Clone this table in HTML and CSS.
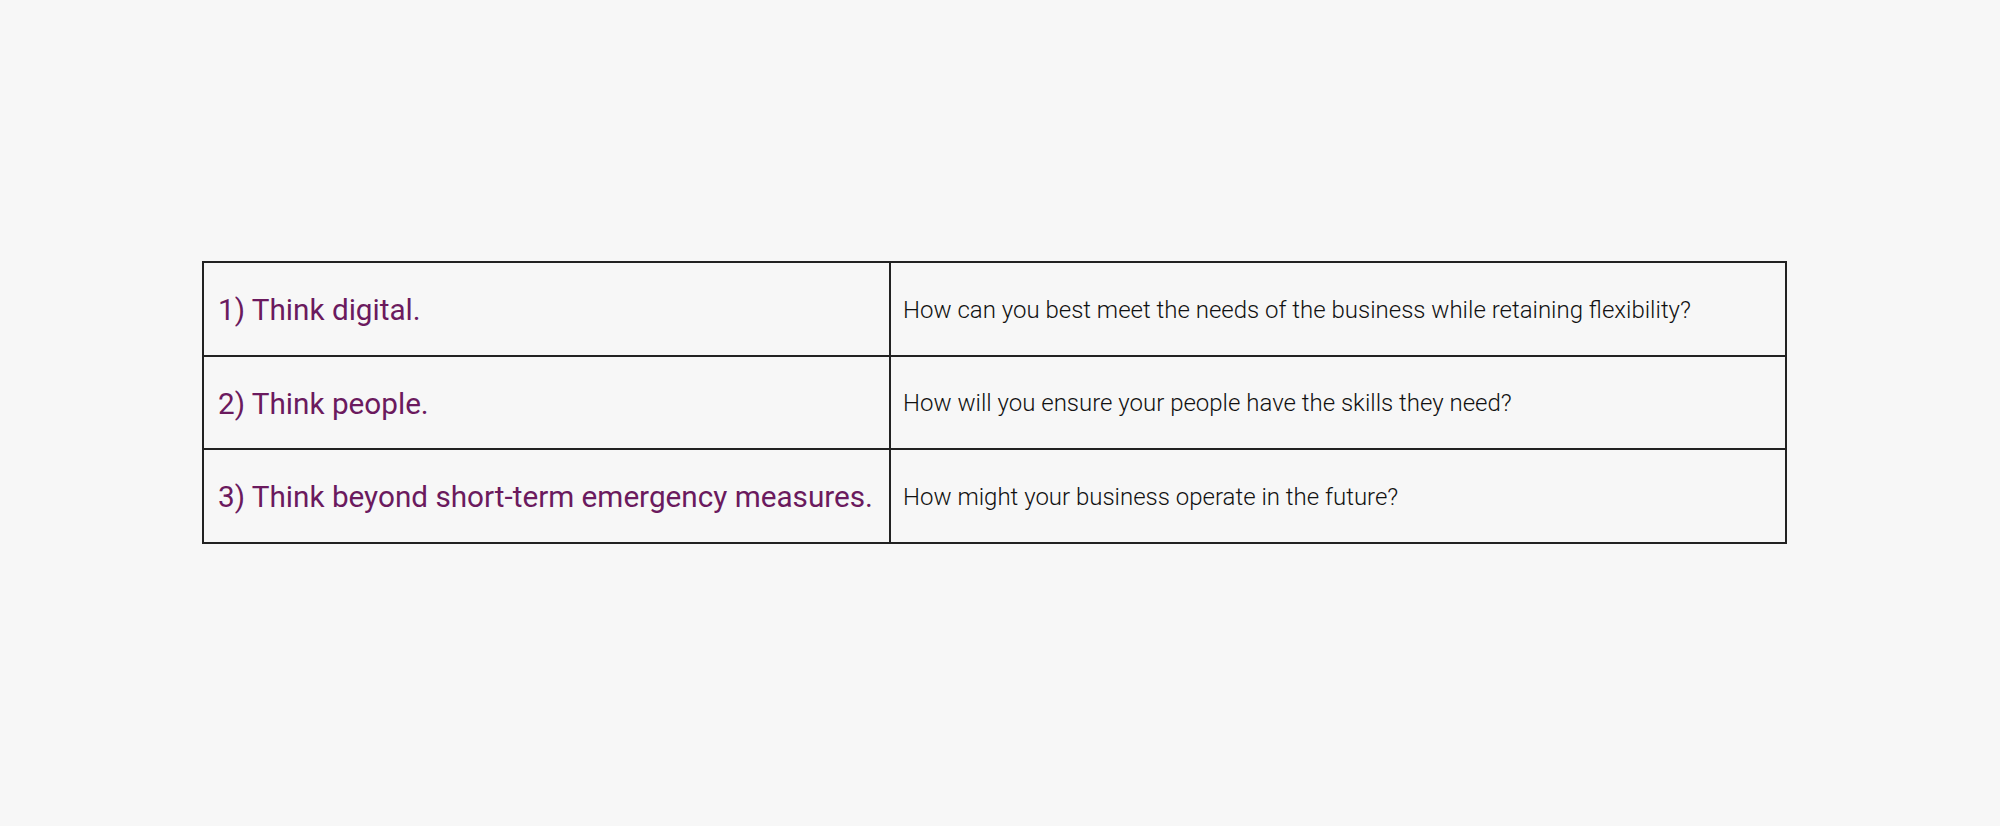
FILE: index.html
```html
<!DOCTYPE html>
<html>
<head>
<meta charset="utf-8">
<link rel="stylesheet" href="styles.css">
</head>
<body>
<main class="page">
  <table class="steps">
    <tr>
      <td class="step">1) Think digital.</td>
      <td class="question">How can you best meet the needs of the business while retaining flexibility?</td>
    </tr>
    <tr>
      <td class="step">2) Think people.</td>
      <td class="question">How will you ensure your people have the skills they need?</td>
    </tr>
    <tr>
      <td class="step">3) Think beyond short-term emergency measures.</td>
      <td class="question">How might your business operate in the future?</td>
    </tr>
  </table>
</main>
</body>
</html>
```
FILE: styles.css
```css
html, body {
  margin: 0;
  padding: 0;
  background: #f7f7f7;
}
.page {
  padding-top: 261px;
  padding-left: 202px;
}
.steps {
  border-collapse: collapse;
  width: 1585px;
  table-layout: fixed;
  font-family: Roboto, "Liberation Sans", sans-serif;
}
.steps td {
  border: 2px solid #222;
  height: 93.5px;
  box-sizing: border-box;
  vertical-align: middle;
  white-space: nowrap;
  padding-top: 2px;
  padding-bottom: 0;
}
.step {
  width: 687px;
  padding-left: 14px;
  padding-right: 14px;
  color: #6b1a5e;
  font-size: 29.7px;
  font-weight: 400;
}
.question {
  padding-left: 12px;
  padding-right: 12px;
  color: #111;
  font-size: 24px;
  font-weight: 300;
}
```
